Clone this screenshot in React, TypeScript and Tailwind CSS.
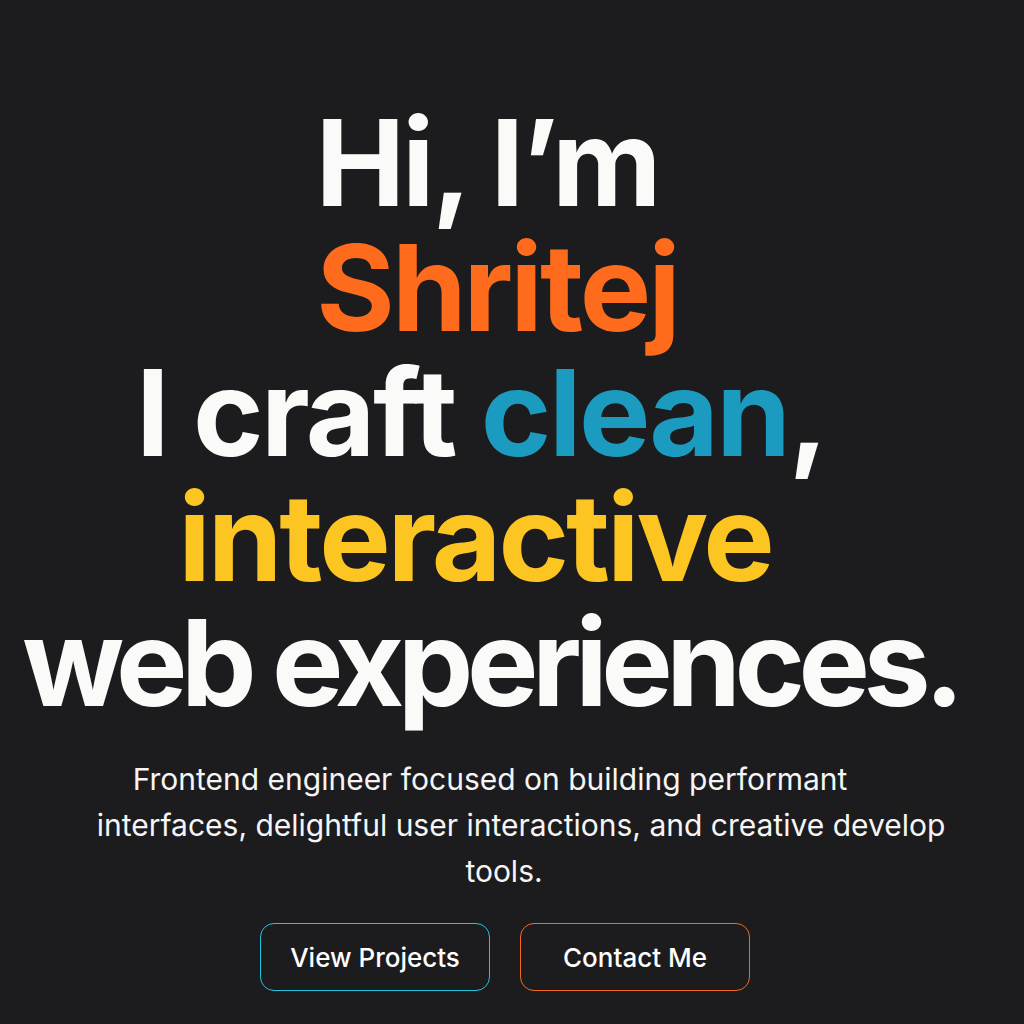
export default function App() {
  return (
    <main className="min-h-screen w-full bg-[#1c1c1e] text-[#fafaf9] font-['Inter',sans-serif] flex flex-col items-center pt-[100px]">
      <h1 className="text-center text-[120px] leading-[125px] font-bold tracking-[-3px] pr-[50px]">
        <span className="block">Hi, I’m</span>
        <span className="block pl-[20px] text-[#ff6b1c]">Shritej</span>
        <span className="block pr-[12px] tracking-[-2.5px]">
          I craft <span className="text-[#1b9bc0]">clean</span>,
        </span>
        <span className="block pr-[24px] text-[#fcc522]">interactive</span>
        <span className="block pl-[6px] tracking-[-6.5px]">web experiences.</span>
      </h1>

      <div className="mt-[31px] text-center text-[30px] leading-[46px] text-[#f5f5f5]">
        <p className="pr-[44px]">Frontend engineer focused on building performant</p>
        <p className="pl-[18px]">interfaces, delightful user interactions, and creative develop</p>
        <p className="pr-[16px]">tools.</p>
      </div>

      <div className="mt-[29px] flex items-center gap-[30px] pr-[14px]">
        <button className="w-[230px] h-[68px] rounded-[14px] border-[1.5px] border-[#22c3de] text-[26px] font-medium text-white">
          View Projects
        </button>
        <button className="w-[230px] h-[68px] rounded-[14px] border-[1.5px] border-[#f26b1d] text-[26px] font-medium text-white">
          Contact Me
        </button>
      </div>
    </main>
  );
}
